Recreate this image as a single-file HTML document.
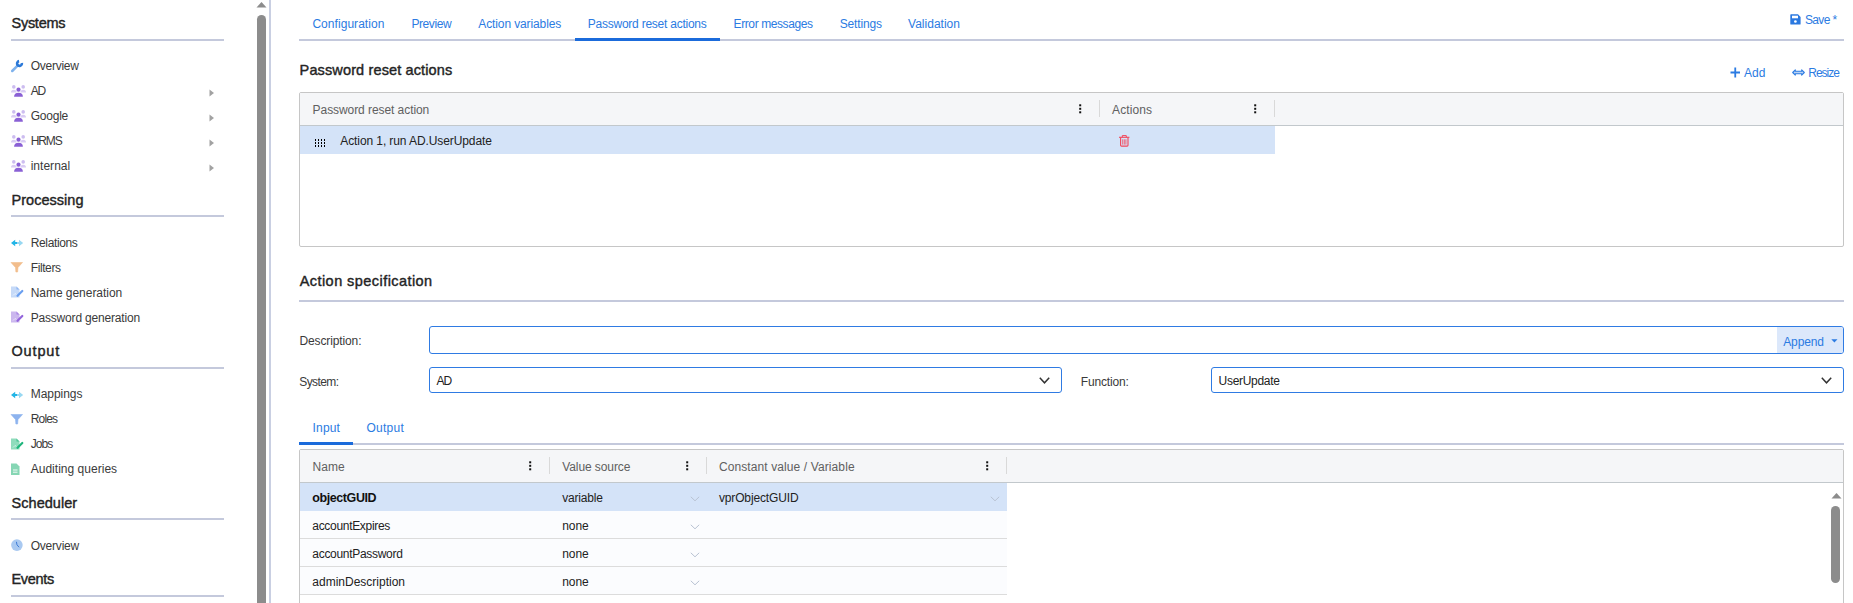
<!DOCTYPE html>
<html><head><meta charset="utf-8"><style>
html,body{margin:0;padding:0;background:#fff;width:1853px;height:603px;overflow:hidden;position:relative}
.t{position:absolute;white-space:nowrap;line-height:1;font-family:"Liberation Sans",sans-serif}
.b{position:absolute;box-sizing:border-box}
svg.b{overflow:visible}
</style></head><body>
<div class="t" style="left:11.50px;top:16.00px;font-size:14.5px;color:#242424;letter-spacing:-0.268px;-webkit-text-stroke:0.4px #242424;">Systems</div>
<div class="b" style="left:11px;top:39px;width:213px;height:2px;background:#c4c9dc"></div>
<div class="t" style="left:11.50px;top:193.00px;font-size:14.5px;color:#242424;letter-spacing:0.033px;-webkit-text-stroke:0.4px #242424;">Processing</div>
<div class="b" style="left:11px;top:215px;width:213px;height:2px;background:#c4c9dc"></div>
<div class="t" style="left:11.50px;top:344.00px;font-size:14.5px;color:#242424;letter-spacing:0.840px;-webkit-text-stroke:0.4px #242424;">Output</div>
<div class="b" style="left:11px;top:367px;width:213px;height:2px;background:#c4c9dc"></div>
<div class="t" style="left:11.50px;top:496.00px;font-size:14.5px;color:#242424;letter-spacing:0.047px;-webkit-text-stroke:0.4px #242424;">Scheduler</div>
<div class="b" style="left:11px;top:518px;width:213px;height:2px;background:#c4c9dc"></div>
<div class="t" style="left:11.50px;top:572.00px;font-size:14.5px;color:#242424;letter-spacing:-0.300px;-webkit-text-stroke:0.4px #242424;">Events</div>
<div class="b" style="left:11px;top:595px;width:213px;height:2px;background:#c4c9dc"></div>
<div class="t" style="left:30.70px;top:60.00px;font-size:12px;color:#3a3a3a;letter-spacing:-0.263px;">Overview</div>
<div class="t" style="left:30.70px;top:85.00px;font-size:12px;color:#3a3a3a;letter-spacing:-1.280px;">AD</div>
<div class="t" style="left:30.70px;top:110.00px;font-size:12px;color:#3a3a3a;letter-spacing:-0.220px;">Google</div>
<div class="t" style="left:30.70px;top:135.00px;font-size:12px;color:#3a3a3a;letter-spacing:-1.113px;">HRMS</div>
<div class="t" style="left:30.70px;top:160.00px;font-size:12px;color:#3a3a3a;letter-spacing:0.020px;">internal</div>
<div class="t" style="left:30.70px;top:237.00px;font-size:12px;color:#3a3a3a;letter-spacing:-0.355px;">Relations</div>
<div class="t" style="left:30.70px;top:262.00px;font-size:12px;color:#3a3a3a;letter-spacing:-0.390px;">Filters</div>
<div class="t" style="left:30.70px;top:287.00px;font-size:12px;color:#3a3a3a;letter-spacing:-0.039px;">Name generation</div>
<div class="t" style="left:30.70px;top:312.00px;font-size:12px;color:#3a3a3a;letter-spacing:-0.186px;">Password generation</div>
<div class="t" style="left:30.70px;top:388.00px;font-size:12px;color:#3a3a3a;letter-spacing:-0.046px;">Mappings</div>
<div class="t" style="left:30.70px;top:413.00px;font-size:12px;color:#3a3a3a;letter-spacing:-0.815px;">Roles</div>
<div class="t" style="left:30.70px;top:438.00px;font-size:12px;color:#3a3a3a;letter-spacing:-0.907px;">Jobs</div>
<div class="t" style="left:30.70px;top:463.00px;font-size:12px;color:#3a3a3a;letter-spacing:0.024px;">Auditing queries</div>
<div class="t" style="left:30.70px;top:540.00px;font-size:12px;color:#3a3a3a;letter-spacing:-0.206px;">Overview</div>
<svg class="b" style="left:209px;top:89px" width="6" height="8"><path d="M0.5 0.5 L5 4 L0.5 7.5Z" fill="#a2a2a2"/></svg>
<svg class="b" style="left:209px;top:114px" width="6" height="8"><path d="M0.5 0.5 L5 4 L0.5 7.5Z" fill="#a2a2a2"/></svg>
<svg class="b" style="left:209px;top:139px" width="6" height="8"><path d="M0.5 0.5 L5 4 L0.5 7.5Z" fill="#a2a2a2"/></svg>
<svg class="b" style="left:209px;top:164px" width="6" height="8"><path d="M0.5 0.5 L5 4 L0.5 7.5Z" fill="#a2a2a2"/></svg>
<svg class="b" style="left:10px;top:59px" width="16" height="14" viewBox="0 0 16 14"><path d="M2.2 12 L7.6 6.6" stroke="#7fb2ec" stroke-width="2.5" stroke-linecap="round"/><path d="M11.86 4.08 A2.4 2.4 0 1 1 9.08 2.14" stroke="#2a78d8" stroke-width="2.6" fill="none"/><path d="M7.2 6.9 L8.6 5.5" stroke="#2a78d8" stroke-width="2.4"/></svg>
<svg class="b" style="left:10px;top:85px" width="17" height="12" viewBox="0 0 17 12"><circle cx="3.8" cy="1.9" r="1.8" fill="#cdbdf0"/><circle cx="13.2" cy="1.9" r="1.8" fill="#cdbdf0"/><path d="M1 7.4 Q1 4.8 3.8 4.8 Q6.6 4.8 6.6 7.4Z" fill="#d9ccf4"/><path d="M10.4 7.4 Q10.4 4.8 13.2 4.8 Q16 4.8 16 7.4Z" fill="#d9ccf4"/><circle cx="8.5" cy="4.7" r="2.1" fill="#8a60d5"/><path d="M4.1 11.8 Q4.1 7.8 8.5 7.8 Q12.9 7.8 12.9 11.8Z" fill="#8a60d5"/></svg>
<svg class="b" style="left:10px;top:110px" width="17" height="12" viewBox="0 0 17 12"><circle cx="3.8" cy="1.9" r="1.8" fill="#cdbdf0"/><circle cx="13.2" cy="1.9" r="1.8" fill="#cdbdf0"/><path d="M1 7.4 Q1 4.8 3.8 4.8 Q6.6 4.8 6.6 7.4Z" fill="#d9ccf4"/><path d="M10.4 7.4 Q10.4 4.8 13.2 4.8 Q16 4.8 16 7.4Z" fill="#d9ccf4"/><circle cx="8.5" cy="4.7" r="2.1" fill="#8a60d5"/><path d="M4.1 11.8 Q4.1 7.8 8.5 7.8 Q12.9 7.8 12.9 11.8Z" fill="#8a60d5"/></svg>
<svg class="b" style="left:10px;top:135px" width="17" height="12" viewBox="0 0 17 12"><circle cx="3.8" cy="1.9" r="1.8" fill="#cdbdf0"/><circle cx="13.2" cy="1.9" r="1.8" fill="#cdbdf0"/><path d="M1 7.4 Q1 4.8 3.8 4.8 Q6.6 4.8 6.6 7.4Z" fill="#d9ccf4"/><path d="M10.4 7.4 Q10.4 4.8 13.2 4.8 Q16 4.8 16 7.4Z" fill="#d9ccf4"/><circle cx="8.5" cy="4.7" r="2.1" fill="#8a60d5"/><path d="M4.1 11.8 Q4.1 7.8 8.5 7.8 Q12.9 7.8 12.9 11.8Z" fill="#8a60d5"/></svg>
<svg class="b" style="left:10px;top:160px" width="17" height="12" viewBox="0 0 17 12"><circle cx="3.8" cy="1.9" r="1.8" fill="#cdbdf0"/><circle cx="13.2" cy="1.9" r="1.8" fill="#cdbdf0"/><path d="M1 7.4 Q1 4.8 3.8 4.8 Q6.6 4.8 6.6 7.4Z" fill="#d9ccf4"/><path d="M10.4 7.4 Q10.4 4.8 13.2 4.8 Q16 4.8 16 7.4Z" fill="#d9ccf4"/><circle cx="8.5" cy="4.7" r="2.1" fill="#8a60d5"/><path d="M4.1 11.8 Q4.1 7.8 8.5 7.8 Q12.9 7.8 12.9 11.8Z" fill="#8a60d5"/></svg>
<svg class="b" style="left:10px;top:239.5px" width="14" height="7" viewBox="0 0 14 7"><path d="M1 3 L5.2 -0.2 L5.2 1.9 L7.2 1.9 L7.2 4.1 L5.2 4.1 L5.2 6.2Z" fill="#22b5e6"/><path d="M13.2 3 L9 -0.2 L9 1.9 L7 1.9 L7 4.1 L9 4.1 L9 6.2Z" fill="#98d8f2"/></svg>
<svg class="b" style="left:10px;top:391.5px" width="14" height="7" viewBox="0 0 14 7"><path d="M1 3 L5.2 -0.2 L5.2 1.9 L7.2 1.9 L7.2 4.1 L5.2 4.1 L5.2 6.2Z" fill="#22b5e6"/><path d="M13.2 3 L9 -0.2 L9 1.9 L7 1.9 L7 4.1 L9 4.1 L9 6.2Z" fill="#98d8f2"/></svg>
<svg class="b" style="left:10px;top:262px" width="14" height="11" viewBox="0 0 14 11"><path d="M1 0.5 L12.5 0.5 L8 5.5 L7.6 10 L5.9 10 L5.5 5.5Z" fill="#f2bd8c" stroke="#f2bd8c" stroke-width="0.6" stroke-linejoin="round"/></svg>
<svg class="b" style="left:10px;top:414px" width="14" height="11" viewBox="0 0 14 11"><path d="M1 0.5 L12.5 0.5 L8 5.5 L7.6 10 L5.9 10 L5.5 5.5Z" fill="#8db3ee" stroke="#8db3ee" stroke-width="0.6" stroke-linejoin="round"/></svg>
<svg class="b" style="left:10px;top:286px" width="15" height="13" viewBox="0 0 15 13"><path d="M1 0.5 L6.5 0.5 L9.5 3.5 L9.5 11.5 L1 11.5Z" fill="#c6daf8"/><path d="M3 9.5 L5 7.5 L6.5 8.5" stroke="#fff" stroke-width="0.8" fill="none" opacity="0.7"/><path d="M7.5 9.8 L12.3 5" stroke="#6a9ff0" stroke-width="2.2" stroke-linecap="round"/><path d="M6.5 0.5 L9.5 3.5 L6.5 3.5Z" fill="#6a9ff0" opacity="0.6"/></svg>
<svg class="b" style="left:10px;top:311px" width="15" height="13" viewBox="0 0 15 13"><path d="M1 0.5 L6.5 0.5 L9.5 3.5 L9.5 11.5 L1 11.5Z" fill="#cbb7ee"/><path d="M3 9.5 L5 7.5 L6.5 8.5" stroke="#fff" stroke-width="0.8" fill="none" opacity="0.7"/><path d="M7.5 9.8 L12.3 5" stroke="#9365dc" stroke-width="2.2" stroke-linecap="round"/><path d="M6.5 0.5 L9.5 3.5 L6.5 3.5Z" fill="#9365dc" opacity="0.6"/></svg>
<svg class="b" style="left:10px;top:438px" width="15" height="13" viewBox="0 0 15 13"><path d="M1 0.5 L6.5 0.5 L9.5 3.5 L9.5 11.5 L1 11.5Z" fill="#8fdcbc"/><path d="M3 9.5 L5 7.5 L6.5 8.5" stroke="#fff" stroke-width="0.8" fill="none" opacity="0.7"/><path d="M7.5 9.8 L12.3 5" stroke="#1fb57c" stroke-width="2.2" stroke-linecap="round"/><path d="M6.5 0.5 L9.5 3.5 L6.5 3.5Z" fill="#1fb57c" opacity="0.6"/></svg>
<svg class="b" style="left:10px;top:463px" width="12" height="13" viewBox="0 0 12 13"><path d="M1 0.5 L6.5 0.5 L9.5 3.5 L9.5 12 L1 12Z" fill="#86d6b4"/><path d="M3 7 H7.5 M3 9.2 H7.5" stroke="#fff" stroke-width="0.9"/></svg>
<svg class="b" style="left:10px;top:539px" width="13" height="13" viewBox="0 0 13 13"><circle cx="6.9" cy="6.1" r="5.8" fill="#a9c9f1"/><path d="M6.4 3.2 Q6.2 6.2 8.8 8" stroke="#3d7bd6" stroke-width="1" fill="none" stroke-linecap="round"/></svg>
<svg class="b" style="left:256px;top:1px" width="11" height="7"><path d="M0.5 6.5 L5.5 1 L10.5 6.5Z" fill="#8c8c8c"/></svg>
<div class="b" style="left:257px;top:14.5px;width:9px;height:600px;background:#8c8c8c;border-radius:4.5px"></div>
<div class="b" style="left:269px;top:0px;width:2px;height:603px;background:#c9cfe2"></div>
<div class="t" style="left:312.40px;top:18.00px;font-size:12px;color:#2b7be2;letter-spacing:0.050px;">Configuration</div>
<div class="t" style="left:411.40px;top:18.00px;font-size:12px;color:#2b7be2;letter-spacing:-0.420px;">Preview</div>
<div class="t" style="left:478.30px;top:18.00px;font-size:12px;color:#2b7be2;letter-spacing:-0.115px;">Action variables</div>
<div class="t" style="left:587.80px;top:18.00px;font-size:12px;color:#2b7be2;letter-spacing:-0.242px;">Password reset actions</div>
<div class="t" style="left:733.60px;top:18.00px;font-size:12px;color:#2b7be2;letter-spacing:-0.409px;">Error messages</div>
<div class="t" style="left:839.70px;top:18.00px;font-size:12px;color:#2b7be2;letter-spacing:-0.140px;">Settings</div>
<div class="t" style="left:908.00px;top:18.00px;font-size:12px;color:#2b7be2;letter-spacing:0.018px;">Validation</div>
<div class="b" style="left:299px;top:39px;width:1545px;height:2px;background:#c4c9dc"></div>
<div class="b" style="left:575px;top:38px;width:145px;height:2.6px;background:#1b6bdb"></div>
<svg class="b" style="left:1790px;top:13.5px" width="11" height="11" viewBox="0 0 11 11"><path d="M0.8 0.3 H8 L10.6 2.9 V9.9 Q10.6 10.6 9.9 10.6 H1 Q0.3 10.6 0.3 9.9 V1 Q0.3 0.3 1 0.3Z" fill="#2a78e0"/><rect x="2" y="1.7" width="6" height="2.6" fill="#fff"/><circle cx="5.4" cy="7.5" r="1.35" fill="#fff"/></svg>
<div class="t" style="left:1804.90px;top:14.00px;font-size:12px;color:#2b7be2;letter-spacing:-0.628px;">Save *</div>
<div class="t" style="left:299.60px;top:63.00px;font-size:14.5px;color:#242424;letter-spacing:0.132px;-webkit-text-stroke:0.4px #242424;">Password reset actions</div>
<svg class="b" style="left:1730px;top:67px" width="11" height="11"><path d="M5.25 0.5 V10.5 M0.5 5.5 H10" stroke="#2b7be2" stroke-width="1.8"/></svg>
<div class="t" style="left:1744.10px;top:67.00px;font-size:12px;color:#2b7be2;letter-spacing:0.020px;">Add</div>
<svg class="b" style="left:1791.5px;top:68.5px" width="13" height="7" viewBox="0 0 13 7"><path d="M0.7 3.5 L3.3 0.9 L3.3 2.3 L9.7 2.3 L9.7 0.9 L12.3 3.5 L9.7 6.1 L9.7 4.7 L3.3 4.7 L3.3 6.1Z" fill="#b9d2f5" stroke="#2b7be2" stroke-width="1.1" stroke-linejoin="round"/></svg>
<div class="t" style="left:1808.20px;top:67.00px;font-size:12px;color:#2b7be2;letter-spacing:-0.972px;">Resize</div>
<div class="b" style="left:299px;top:92px;width:1545px;height:155px;border:1px solid #c6c6c6;border-radius:2px;background:#fff"></div>
<div class="b" style="left:300px;top:93px;width:1543px;height:33px;background:#f5f6f8;border-bottom:1px solid #c2c8cc"></div>
<div class="b" style="left:300px;top:126px;width:975px;height:28px;background:#d4e3f8"></div>
<div class="t" style="left:312.60px;top:104.00px;font-size:12px;color:#606060;letter-spacing:-0.069px;">Password reset action</div>
<div class="t" style="left:1112.10px;top:104.00px;font-size:12px;color:#606060;letter-spacing:0.107px;">Actions</div>
<svg class="b" style="left:1079px;top:104px" width="3" height="10"><rect x="0.2" y="0.3" width="2" height="2" fill="#111"/><rect x="0.2" y="3.8" width="2" height="2" fill="#111"/><rect x="0.2" y="7.3" width="2" height="2" fill="#111"/></svg>
<svg class="b" style="left:1254px;top:104px" width="3" height="10"><rect x="0.2" y="0.3" width="2" height="2" fill="#111"/><rect x="0.2" y="3.8" width="2" height="2" fill="#111"/><rect x="0.2" y="7.3" width="2" height="2" fill="#111"/></svg>
<div class="b" style="left:1099px;top:100px;width:1px;height:17px;background:#d9d9d9"></div>
<div class="b" style="left:1274px;top:100px;width:1px;height:17px;background:#d9d9d9"></div>
<svg class="b" style="left:315px;top:139px" width="12" height="9"><rect x="0" y="0" width="1" height="2" fill="#000"/><rect x="0" y="3" width="1" height="2" fill="#000"/><rect x="0" y="6" width="1" height="2" fill="#000"/><rect x="3" y="0" width="1" height="2" fill="#000"/><rect x="3" y="3" width="1" height="2" fill="#000"/><rect x="3" y="6" width="1" height="2" fill="#000"/><rect x="6" y="0" width="1" height="2" fill="#000"/><rect x="6" y="3" width="1" height="2" fill="#000"/><rect x="6" y="6" width="1" height="2" fill="#000"/><rect x="9" y="0" width="1" height="2" fill="#000"/><rect x="9" y="3" width="1" height="2" fill="#000"/><rect x="9" y="6" width="1" height="2" fill="#000"/></svg>
<div class="t" style="left:340.30px;top:135.00px;font-size:12px;color:#222;letter-spacing:-0.095px;">Action 1, run AD.UserUpdate</div>
<svg class="b" style="left:1119px;top:135px" width="11" height="12" viewBox="0 0 11 12"><path d="M0 2.3 H10.4" stroke="#f2465a" stroke-width="1.1"/><path d="M3.3 2.3 V0.6 H7.3 V2.3" stroke="#f2465a" stroke-width="1" fill="none"/><path d="M1.6 2.5 V10.2 Q1.6 11.1 2.5 11.1 H8.1 Q9 11.1 9 10.2 V2.5" stroke="#f2465a" stroke-width="1.1" fill="none"/><path d="M3.7 4.3 V9.6 M5.3 4.3 V9.6 M6.9 4.3 V9.6" stroke="#f2465a" stroke-width="0.8"/></svg>
<div class="t" style="left:299.70px;top:274.00px;font-size:14.5px;color:#242424;letter-spacing:0.441px;-webkit-text-stroke:0.4px #242424;">Action specification</div>
<div class="b" style="left:299px;top:300px;width:1545px;height:2px;background:#c4c9dc"></div>
<div class="t" style="left:299.50px;top:335.00px;font-size:12px;color:#3a3a3a;letter-spacing:-0.124px;">Description:</div>
<div class="b" style="left:429px;top:326px;width:1415px;height:28px;border:1px solid #2f7be3;border-radius:3px;background:#fff"></div>
<div class="b" style="left:1777px;top:327px;width:66px;height:26px;background:#dce8fb;border-radius:0 2px 2px 0"></div>
<div class="t" style="left:1783.20px;top:335.50px;font-size:12px;color:#2b7be2;letter-spacing:-0.120px;">Append</div>
<svg class="b" style="left:1831px;top:339px" width="7" height="4"><path d="M0.3 0.3 H6.5 L3.4 3.4Z" fill="#2b7be2"/></svg>
<div class="t" style="left:299.30px;top:376.00px;font-size:12px;color:#3a3a3a;letter-spacing:-0.603px;">System:</div>
<div class="b" style="left:429px;top:367px;width:633px;height:26px;border:1px solid #2f7be3;border-radius:3px;background:#fff"></div>
<div class="t" style="left:436.60px;top:375.00px;font-size:12px;color:#222;letter-spacing:-1.180px;">AD</div>
<svg class="b" style="left:1038.5px;top:376.5px" width="11" height="7"><path d="M0.8 0.8 L5.5 5.8 L10.2 0.8" stroke="#333" stroke-width="1.5" fill="none"/></svg>
<div class="t" style="left:1080.80px;top:376.00px;font-size:12px;color:#3a3a3a;letter-spacing:-0.173px;">Function:</div>
<div class="b" style="left:1211px;top:367px;width:633px;height:26px;border:1px solid #2f7be3;border-radius:3px;background:#fff"></div>
<div class="t" style="left:1218.60px;top:375.00px;font-size:12px;color:#222;letter-spacing:-0.302px;">UserUpdate</div>
<svg class="b" style="left:1820.5px;top:376.5px" width="11" height="7"><path d="M0.8 0.8 L5.5 5.8 L10.2 0.8" stroke="#333" stroke-width="1.5" fill="none"/></svg>
<div class="t" style="left:312.60px;top:422.00px;font-size:12px;color:#2b7be2;letter-spacing:0.150px;">Input</div>
<div class="t" style="left:366.40px;top:422.00px;font-size:12px;color:#2b7be2;letter-spacing:0.280px;">Output</div>
<div class="b" style="left:299px;top:443px;width:1545px;height:2px;background:#c4c9dc"></div>
<div class="b" style="left:299px;top:442px;width:54px;height:2.6px;background:#1b6bdb"></div>
<div class="b" style="left:299px;top:449px;width:1545px;height:200px;border:1px solid #c6c6c6;border-radius:2px;background:#fff"></div>
<div class="b" style="left:300px;top:450px;width:1543px;height:33px;background:#f5f6f8;border-bottom:1px solid #c2c8cc"></div>
<div class="t" style="left:312.60px;top:461.00px;font-size:12px;color:#606060;">Name</div>
<div class="t" style="left:562.20px;top:461.00px;font-size:12px;color:#606060;letter-spacing:-0.080px;">Value source</div>
<div class="t" style="left:718.90px;top:461.00px;font-size:12px;color:#606060;letter-spacing:0.104px;">Constant value / Variable</div>
<svg class="b" style="left:529px;top:461px" width="3" height="10"><rect x="0.2" y="0.3" width="2" height="2" fill="#111"/><rect x="0.2" y="3.8" width="2" height="2" fill="#111"/><rect x="0.2" y="7.3" width="2" height="2" fill="#111"/></svg>
<svg class="b" style="left:686px;top:461px" width="3" height="10"><rect x="0.2" y="0.3" width="2" height="2" fill="#111"/><rect x="0.2" y="3.8" width="2" height="2" fill="#111"/><rect x="0.2" y="7.3" width="2" height="2" fill="#111"/></svg>
<svg class="b" style="left:986px;top:461px" width="3" height="10"><rect x="0.2" y="0.3" width="2" height="2" fill="#111"/><rect x="0.2" y="3.8" width="2" height="2" fill="#111"/><rect x="0.2" y="7.3" width="2" height="2" fill="#111"/></svg>
<div class="b" style="left:549px;top:457px;width:1px;height:17px;background:#d9d9d9"></div>
<div class="b" style="left:706px;top:457px;width:1px;height:17px;background:#d9d9d9"></div>
<div class="b" style="left:1006px;top:457px;width:1px;height:17px;background:#d9d9d9"></div>
<div class="b" style="left:300px;top:483px;width:707px;height:28px;background:#d4e3f8"></div>
<div class="t" style="left:312.30px;top:492.00px;font-size:12.5px;color:#111;font-weight:bold;letter-spacing:-0.418px;">objectGUID</div>
<div class="t" style="left:562.20px;top:492.00px;font-size:12px;color:#222;letter-spacing:-0.171px;">variable</div>
<div class="t" style="left:718.90px;top:492.00px;font-size:12px;color:#222;letter-spacing:-0.138px;">vprObjectGUID</div>
<svg class="b" style="left:689.5px;top:496px" width="10" height="6"><path d="M0.8 0.8 L5.0 4.8 L9.2 0.8" stroke="#b9c3d3" stroke-width="1" fill="none"/></svg>
<svg class="b" style="left:989.5px;top:496px" width="10" height="6"><path d="M0.8 0.8 L5.0 4.8 L9.2 0.8" stroke="#b9c3d3" stroke-width="1" fill="none"/></svg>
<div class="b" style="left:300px;top:511px;width:707px;height:28px;background:#fbfcfe;border-bottom:1px solid #dcdcdc"></div>
<div class="t" style="left:312.30px;top:520.00px;font-size:12px;color:#222;letter-spacing:-0.309px;">accountExpires</div>
<div class="t" style="left:562.20px;top:520.00px;font-size:12px;color:#222;letter-spacing:-0.067px;">none</div>
<svg class="b" style="left:689.5px;top:524px" width="10" height="6"><path d="M0.8 0.8 L5.0 4.8 L9.2 0.8" stroke="#b9c3d3" stroke-width="1" fill="none"/></svg>
<div class="b" style="left:300px;top:539px;width:707px;height:28px;background:#fbfcfe;border-bottom:1px solid #dcdcdc"></div>
<div class="t" style="left:312.30px;top:548.00px;font-size:12px;color:#222;letter-spacing:-0.296px;">accountPassword</div>
<div class="t" style="left:562.20px;top:548.00px;font-size:12px;color:#222;letter-spacing:-0.067px;">none</div>
<svg class="b" style="left:689.5px;top:552px" width="10" height="6"><path d="M0.8 0.8 L5.0 4.8 L9.2 0.8" stroke="#b9c3d3" stroke-width="1" fill="none"/></svg>
<div class="b" style="left:300px;top:567px;width:707px;height:28px;background:#fbfcfe;border-bottom:1px solid #dcdcdc"></div>
<div class="t" style="left:312.30px;top:576.00px;font-size:12px;color:#222;">adminDescription</div>
<div class="t" style="left:562.20px;top:576.00px;font-size:12px;color:#222;letter-spacing:-0.067px;">none</div>
<svg class="b" style="left:689.5px;top:580px" width="10" height="6"><path d="M0.8 0.8 L5.0 4.8 L9.2 0.8" stroke="#b9c3d3" stroke-width="1" fill="none"/></svg>
<svg class="b" style="left:1830.5px;top:492px" width="11" height="7"><path d="M0.5 6.5 L5.5 1 L10.5 6.5Z" fill="#8c8c8c"/></svg>
<div class="b" style="left:1831px;top:506px;width:9px;height:77px;background:#8c8c8c;border-radius:4.5px"></div>
</body></html>
